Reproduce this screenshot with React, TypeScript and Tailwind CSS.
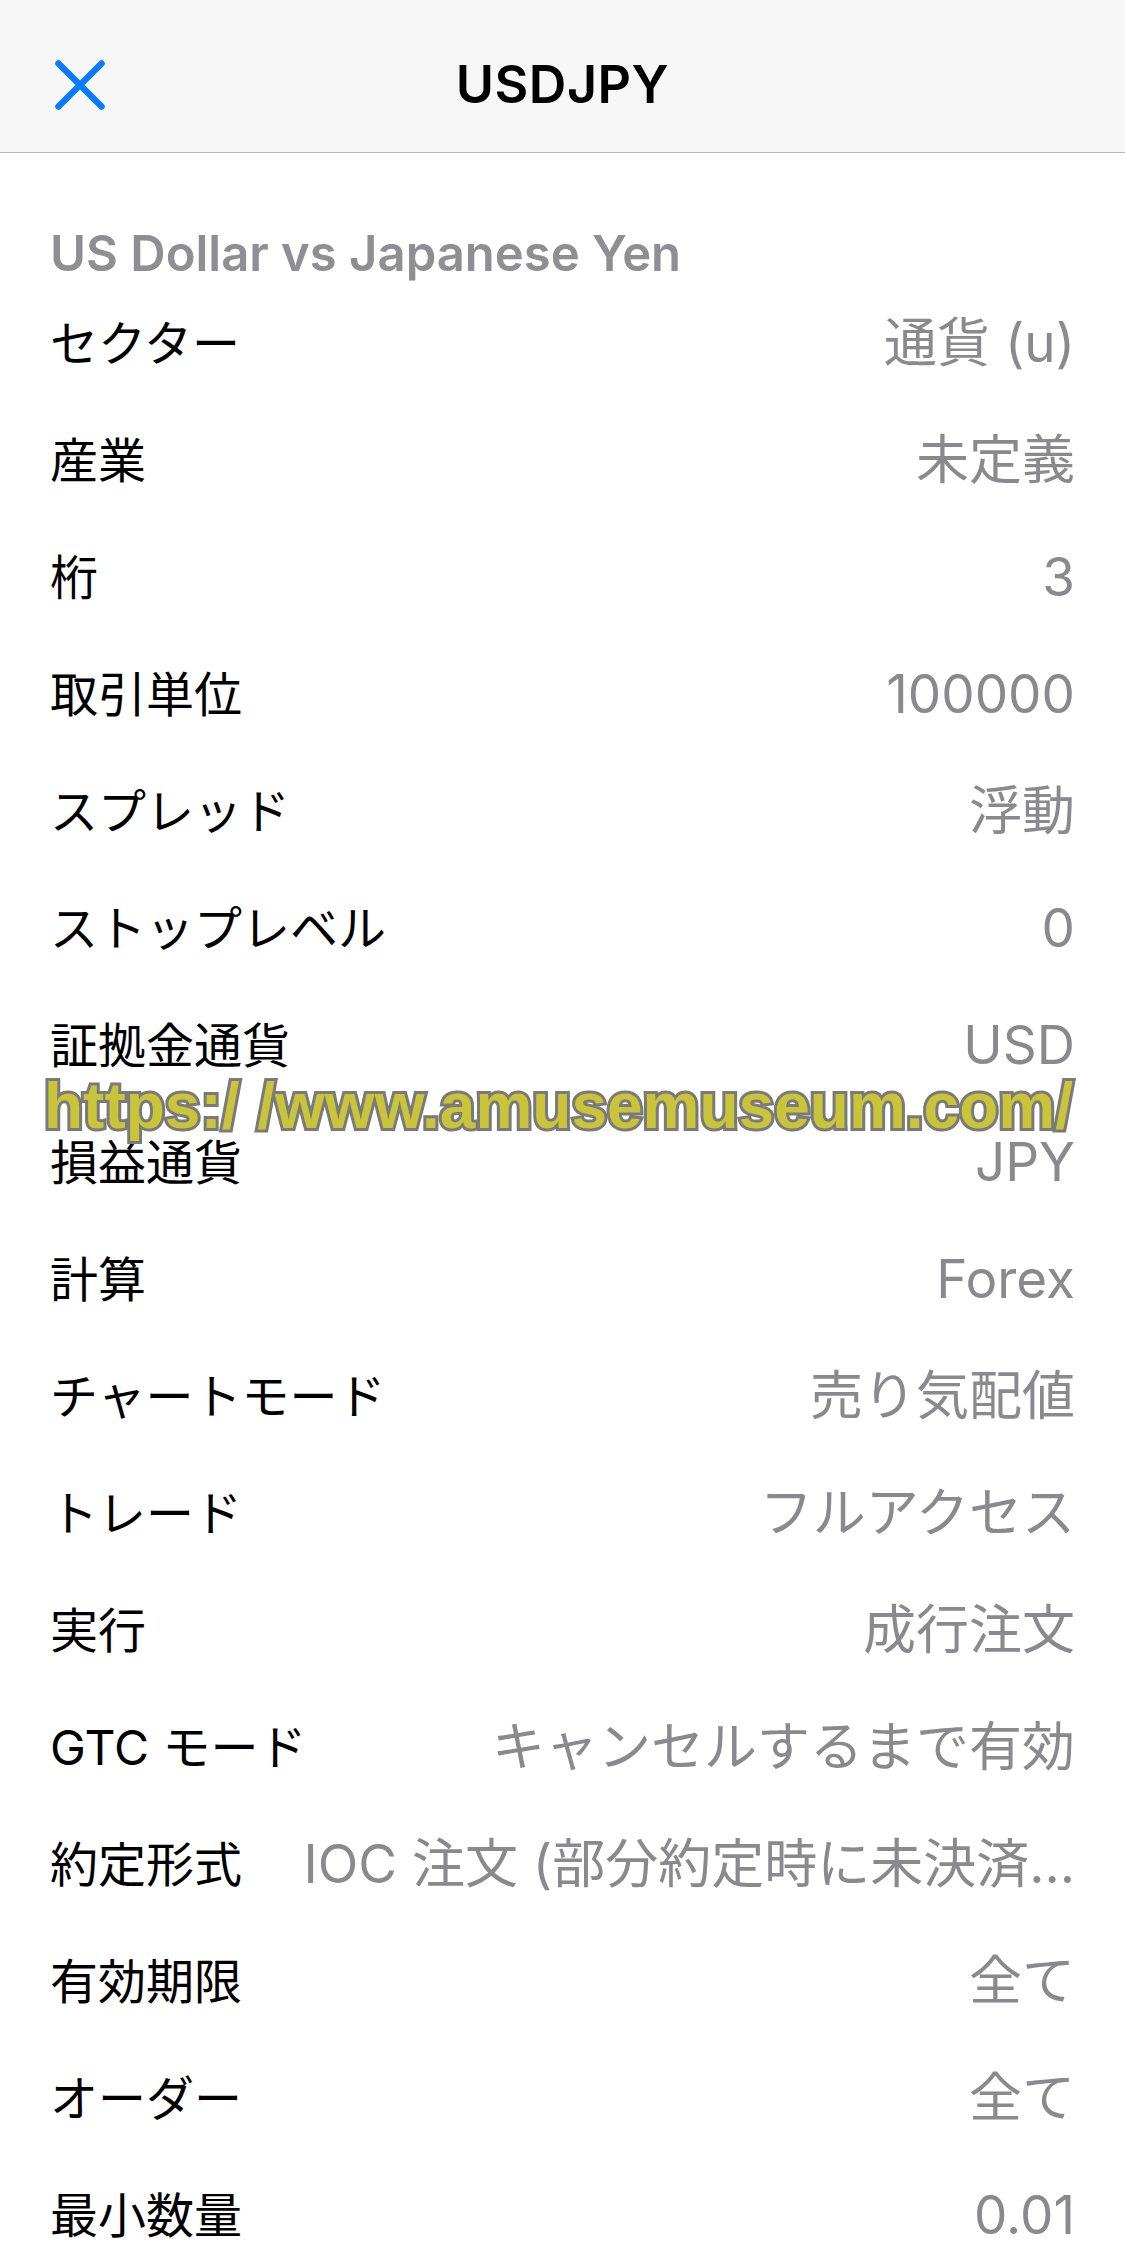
const ROWS: [string, string][] = [
  ['セクター', '通貨 (u)'],
  ['産業', '未定義'],
  ['桁', '3'],
  ['取引単位', '100000'],
  ['スプレッド', '浮動'],
  ['ストップレベル', '0'],
  ['証拠金通貨', 'USD'],
  ['損益通貨', 'JPY'],
  ['計算', 'Forex'],
  ['チャートモード', '売り気配値'],
  ['トレード', 'フルアクセス'],
  ['実行', '成行注文'],
  ['GTC モード', 'キャンセルするまで有効'],
  ['約定形式', 'IOC 注文 (部分約定時に未決済…'],
  ['有効期限', '全て'],
  ['オーダー', '全て'],
  ['最小数量', '0.01'],
];

function CloseIcon() {
  return (
    <svg width="56" height="56" viewBox="0 0 56 56" fill="none">
      <path d="M6.5 6.5 L49.5 49.5 M49.5 6.5 L6.5 49.5" stroke="#0a7aff" strokeWidth="6.5" strokeLinecap="round" />
    </svg>
  );
}

export default function App() {
  return (
    <div className="w-[1125px] h-[2268px] overflow-hidden bg-white font-['Inter','Noto_Sans_CJK_JP',sans-serif]">
      {/* Nav bar */}
      <header className="h-[153px] pt-[18px] bg-[#f7f7f7] border-b border-[#b9b9bb] grid grid-cols-[1fr_auto_1fr] items-center">
        <div className="pl-[52px] flex items-center">
          <CloseIcon />
        </div>
        <h1 className="text-[52px] font-semibold text-black tracking-[0.5px] leading-none">USDJPY</h1>
        <div />
      </header>

      <main className="relative px-[50px]">
        <div className="h-[132px] flex items-end">
          <p className="text-[49px] leading-[62px] font-semibold text-[#8e8e93]">US Dollar vs Japanese Yen</p>
        </div>

        {ROWS.map(([label, value]) => (
          <div key={label} className="h-[117px] flex items-center justify-between gap-[56px]">
            <span className="shrink-0 text-[48px] text-black">{label}</span>
            <span className="min-w-0 truncate text-right text-[53px] text-[#8a8a8e]">{value}</span>
          </div>
        ))}

        {/* Watermark */}
        <div className="absolute left-[44px] top-[921px] text-[64px] leading-none font-bold font-['Liberation_Sans',sans-serif] text-[#c9c43a] [-webkit-text-stroke:6px_#7a7a7a] [paint-order:stroke_fill] whitespace-nowrap">
          https:/ /www.amusemuseum.com/
        </div>
      </main>
    </div>
  );
}
